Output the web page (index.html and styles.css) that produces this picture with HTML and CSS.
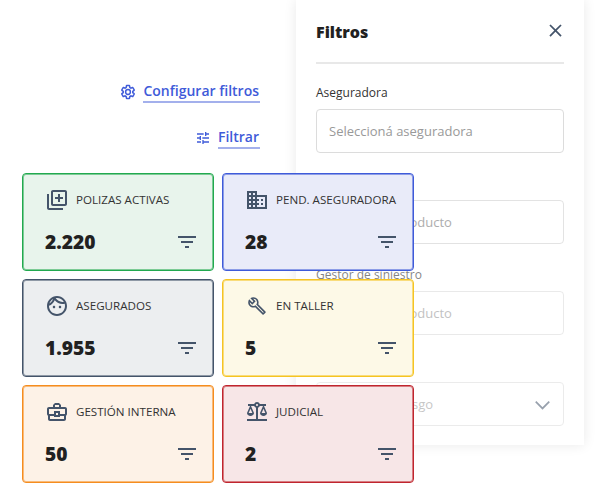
FILE: index.html
```html
<!DOCTYPE html>
<html lang="es">
<head>
<meta charset="utf-8">
<title>Filtros</title>
<link rel="stylesheet" href="styles.css">
</head>
<body>
<main class="main">
  <div class="actions">
    <a class="action" href="#">
      <svg class="action-icon" viewBox="0 0 24 24"><path d="M19.14 12.94c.04-.3.06-.61.06-.94 0-.32-.02-.64-.07-.94l2.03-1.58c.18-.14.23-.41.12-.61l-1.92-3.32c-.12-.22-.37-.29-.59-.22l-2.39.96c-.5-.38-1.03-.7-1.62-.94l-.36-2.54c-.04-.24-.24-.41-.48-.41h-3.84c-.24 0-.43.17-.47.41l-.36 2.54c-.59.24-1.13.57-1.62.94l-2.39-.96c-.22-.08-.47 0-.59.22L2.74 8.87c-.12.21-.08.47.12.61l2.03 1.58c-.05.3-.09.63-.09.94s.02.64.07.94l-2.03 1.58c-.18.14-.23.41-.12.61l1.92 3.32c.12.22.37.29.59.22l2.39-.96c.5.38 1.03.7 1.62.94l.36 2.54c.05.24.24.41.48.41h3.84c.24 0 .44-.17.47-.41l.36-2.54c.59-.24 1.13-.56 1.62-.94l2.39.96c.22.08.47 0 .59-.22l1.92-3.32c.12-.22.07-.47-.12-.61l-2.01-1.58zM12 15.6c-1.98 0-3.6-1.62-3.6-3.6s1.62-3.6 3.6-3.6 3.6 1.62 3.6 3.6-1.62 3.6-3.6 3.6z" fill="none" stroke="currentColor" stroke-width="2.2"/></svg>
      <span class="action-text">Configurar filtros</span>
    </a>
    <a class="action" href="#">
      <svg class="action-icon" viewBox="0 0 24 24"><path d="M3 17v2h6v-2H3zM3 5v2h10V5H3zm10 16v-2h8v-2h-8v-2h-2v6h2zM7 9v2H3v2h4v2h2V9H7zm14 4v-2H11v2h10zm-6-4h2V7h4V5h-4V3h-2v6z"/></svg>
      <span class="action-text">Filtrar</span>
    </a>
  </div>
  <div class="cards">
    <section class="card green">
      <div class="card-head">
        <svg class="card-icon" viewBox="0 0 24 24"><path d="M4 6H2v14c0 1.1.9 2 2 2h14v-2H4V6zm16-4H8c-1.1 0-2 .9-2 2v12c0 1.1.9 2 2 2h12c1.1 0 2-.9 2-2V4c0-1.1-.9-2-2-2zm0 14H8V4h12v12zm-7-2h2v-3h3V9h-3V6h-2v3h-3v2h3z"/></svg>
        <span class="card-label">POLIZAS ACTIVAS</span>
      </div>
      <div class="card-foot">
        <span class="card-value">2.220</span>
        <svg class="card-icon" viewBox="0 0 24 24"><path d="M10 18h4v-2h-4v2zM3 6v2h18V6H3zm3 7h12v-2H6v2z"/></svg>
      </div>
    </section>
    <section class="card blue">
      <div class="card-head">
        <svg class="card-icon" viewBox="0 0 24 24"><path d="M12 7V3H2v18h20V7H12zM6 19H4v-2h2v2zm0-4H4v-2h2v2zm0-4H4V9h2v2zm0-4H4V5h2v2zm4 12H8v-2h2v2zm0-4H8v-2h2v2zm0-4H8V9h2v2zm0-4H8V5h2v2zm10 12h-8v-2h2v-2h-2v-2h2v-2h-2V9h8v10zm-2-8h-2v2h2v-2zm0 4h-2v2h2v-2z"/></svg>
        <span class="card-label">PEND. ASEGURADORA</span>
      </div>
      <div class="card-foot">
        <span class="card-value">28</span>
        <svg class="card-icon" viewBox="0 0 24 24"><path d="M10 18h4v-2h-4v2zM3 6v2h18V6H3zm3 7h12v-2H6v2z"/></svg>
      </div>
    </section>
    <section class="card slate">
      <div class="card-head">
        <svg class="card-icon" viewBox="0 0 24 24"><path d="M10.25 13c0 .69-.56 1.25-1.25 1.25S7.75 13.69 7.75 13s.56-1.25 1.25-1.25 1.25.56 1.25 1.25zM15 11.75c-.69 0-1.25.56-1.25 1.25s.56 1.25 1.25 1.25 1.25-.56 1.25-1.25-.56-1.25-1.25-1.25zm7 .25c0 5.52-4.48 10-10 10S2 17.52 2 12 6.48 2 12 2s10 4.48 10 10zM10.66 4.12C12.06 6.44 14.6 8 17.5 8c.46 0 .91-.05 1.34-.12C17.44 5.56 14.9 4 12 4c-.46 0-.91.05-1.34.12zM4.42 9.47c1.71-.97 3.03-2.55 3.66-4.44C6.37 6 5.05 7.58 4.42 9.47zM20 12c0-.78-.12-1.53-.33-2.24-.7.15-1.42.24-2.17.24-3.13 0-5.92-1.44-7.76-3.69C8.69 8.87 6.6 10.88 4 11.86c.01.04 0 .09 0 .14 0 4.41 3.59 8 8 8s8-3.59 8-8z"/></svg>
        <span class="card-label">ASEGURADOS</span>
      </div>
      <div class="card-foot">
        <span class="card-value">1.955</span>
        <svg class="card-icon" viewBox="0 0 24 24"><path d="M10 18h4v-2h-4v2zM3 6v2h18V6H3zm3 7h12v-2H6v2z"/></svg>
      </div>
    </section>
    <section class="card yellow">
      <div class="card-head">
        <svg class="card-icon" viewBox="-3 -3 30 30"><path d="M22.61 18.99l-9.08-9.08c.93-2.34.45-5.1-1.44-7C9.79.61 6.21.4 3.66 2.26L7.5 6.11 6.08 7.52 2.25 3.69C.39 6.23.6 9.82 2.9 12.11c1.86 1.86 4.57 2.35 6.89 1.48l9.11 9.11c.39.39 1.02.39 1.41 0l2.3-2.3c.4-.38.4-1.01 0-1.41zm-3 1.6l-9.46-9.46c-.61.45-1.29.72-2 .82-1.36.2-2.79-.21-3.83-1.25C3.37 9.76 2.93 8.5 3 7.26l3.09 3.09 4.24-4.24-3.09-3.09c1.24-.07 2.49.37 3.44 1.31 1.08 1.08 1.49 2.57 1.24 3.96-.12.71-.42 1.37-.88 1.96l9.45 9.45-.88.88z"/></svg>
        <span class="card-label">EN TALLER</span>
      </div>
      <div class="card-foot">
        <span class="card-value">5</span>
        <svg class="card-icon" viewBox="0 0 24 24"><path d="M10 18h4v-2h-4v2zM3 6v2h18V6H3zm3 7h12v-2H6v2z"/></svg>
      </div>
    </section>
    <section class="card orange">
      <div class="card-head">
        <svg class="card-icon" viewBox="0 0 24 24"><path d="M20 7h-4V5l-2-2h-4L8 5v2H4c-1.1 0-2 .9-2 2v5c0 .75.4 1.38 1 1.73V19c0 1.11.89 2 2 2h14c1.11 0 2-.89 2-2v-3.28c.59-.35 1-.99 1-1.72V9c0-1.1-.9-2-2-2zM10 5h4v2h-4V5zM4 9h16v5h-5v-3H9v3H4V9zm9 6h-2v-2h2v2zm6 4H5v-3h4v1h6v-1h4v3z"/></svg>
        <span class="card-label">GESTIÓN INTERNA</span>
      </div>
      <div class="card-foot">
        <span class="card-value">50</span>
        <svg class="card-icon" viewBox="0 0 24 24"><path d="M10 18h4v-2h-4v2zM3 6v2h18V6H3zm3 7h12v-2H6v2z"/></svg>
      </div>
    </section>
    <section class="card red">
      <div class="card-head">
        <svg class="card-icon" viewBox="0 0 24 24"><path d="M13 7.83c.85-.3 1.53-.98 1.83-1.83H18l-3 7c0 1.66 1.57 3 3.5 3s3.5-1.34 3.5-3l-3-7h2V4h-6.17c-.41-1.17-1.52-2-2.83-2s-2.42.83-2.83 2H3v2h2l-3 7c0 1.66 1.57 3 3.5 3S9 14.66 9 13L6 6h3.17c.3.85.98 1.53 1.83 1.83V19H2v2h20v-2h-9V7.83zM20.37 13h-3.74l1.87-4.36L20.37 13zm-13 0H3.63L5.5 8.64 7.37 13zM12 6c-.55 0-1-.45-1-1 0-.55.45-1 1-1s1 .45 1 1C13 5.55 12.55 6 12 6z"/></svg>
        <span class="card-label">JUDICIAL</span>
      </div>
      <div class="card-foot">
        <span class="card-value">2</span>
        <svg class="card-icon" viewBox="0 0 24 24"><path d="M10 18h4v-2h-4v2zM3 6v2h18V6H3zm3 7h12v-2H6v2z"/></svg>
      </div>
    </section>
  </div>
</main>
<aside class="drawer">
  <header class="drawer-head">
    <h2 class="drawer-title">Filtros</h2>
    <svg class="close" viewBox="0 0 24 24"><path d="M19 6.41 17.59 5 12 10.59 6.41 5 5 6.41 10.59 12 5 17.59 6.41 19 12 13.41 17.59 19 19 17.59 13.41 12z"/></svg>
  </header>
  <div class="field">
    <label class="field-label">Aseguradora</label>
    <div class="input">Seleccioná aseguradora</div>
  </div>
  <div class="field fade-1">
    <label class="field-label">Producto</label>
    <div class="input">Seleccioná producto</div>
  </div>
  <div class="field fade-2">
    <label class="field-label">Gestor de siniestro</label>
    <div class="input">Seleccioná producto</div>
  </div>
  <div class="field fade-3">
    <label class="field-label">Riesgo</label>
    <div class="input">Seleccioná riesgo
      <svg class="chevron" viewBox="0 0 24 24"><path d="M6 9.5l6 6 6-6"/></svg>
    </div>
  </div>
</aside>
</body>
</html>
```

FILE: styles.css
```css
* { box-sizing: border-box; }
html, body { height: 100%; }
body {
  margin: 0;
  background: #fff;
  font-family: "Open Sans", "Liberation Sans", sans-serif;
  color: #212121;
  overflow: hidden;
}
.main {
  position: relative;
  z-index: 2;
  width: 414px;
  padding: 80px 0 0 22px;
}
.actions {
  width: 238px;
  display: flex;
  flex-direction: column;
  align-items: flex-end;
  gap: 23px;
}
.action {
  display: flex;
  align-items: center;
  gap: 7px;
  color: #3f5bd9;
  text-decoration: none;
}
.action-icon {
  width: 16px;
  height: 16px;
  fill: currentColor;
}
.action-text {
  font-size: 14px;
  font-weight: 600;
  line-height: 21px;
  padding-right: 1px;
  border-bottom: 2px solid #a3b0ec;
}
.cards {
  display: grid;
  grid-template-columns: 192px 192px;
  grid-auto-rows: 98px;
  gap: 8px;
  margin-top: 24px;
}
.card {
  border: 1px solid var(--edge);
  box-shadow: inset 0 0 0 1px color-mix(in srgb, var(--edge) 55%, transparent);
  border-radius: 4px;
  padding: 14px 14px 0 22px;
  display: flex;
  flex-direction: column;
  gap: 18px;
}
.card-head, .card-foot {
  display: flex;
  align-items: center;
}
.card-foot { justify-content: space-between; }
.card-icon {
  width: 24px;
  height: 24px;
  fill: #44546a;
  flex: none;
}
.card-label {
  margin-left: 7px;
  font-size: 11.6px;
  line-height: 16px;
  white-space: nowrap;
  color: #333;
}
.card-value {
  font-size: 19.2px;
  font-weight: 800;
  line-height: 24px;
  color: #212121;
}
.green { background: #e8f4ec; --edge: #22a94f; }
.blue { background: #e9ebf9; --edge: #3f5bd9; }
.slate { background: #eceef0; --edge: #44546a; }
.yellow { background: #fdf9e7; --edge: #f5c423; }
.orange { background: #fdf2e7; --edge: #f58d1f; }
.red { background: #f7e6e7; --edge: #c0252e; }

.drawer {
  position: absolute;
  z-index: 1;
  top: 0;
  left: 296px;
  width: 288px;
  height: 445px;
  padding: 0 20px;
  background: #fff;
  box-shadow: 0 0 12px rgba(0, 0, 0, 0.09);
}
.drawer-head {
  height: 64px;
  display: flex;
  justify-content: space-between;
  align-items: flex-start;
  border-bottom: 2px solid #e8e8e8;
  margin-bottom: 20px;
}
.drawer-title {
  margin: 21px 0 0;
  font-size: 16px;
  font-weight: 800;
  line-height: 22px;
  color: #212121;
}
.close {
  width: 21px;
  height: 21px;
  margin: 19.5px -1.5px 0 0;
  fill: #44546a;
}
.field {
  display: flex;
  flex-direction: column;
  gap: 8px;
  margin-bottom: 22px;
}
.field-label {
  font-size: 12px;
  line-height: 17px;
  color: #333;
}
.input {
  height: 44px;
  padding: 0 12px;
  display: flex;
  align-items: center;
  justify-content: space-between;
  font-size: 13px;
  color: #999;
  border: 1px solid #dcdcdc;
  border-radius: 4px;
}
.chevron {
  width: 27px;
  height: 27px;
  fill: none;
  stroke: #44546a;
  stroke-width: 1.5;
  margin-right: -5px;
}
.fade-1 { opacity: 0.8; }
.fade-2 { opacity: 0.6; }
.fade-3 { opacity: 0.55; }
```
